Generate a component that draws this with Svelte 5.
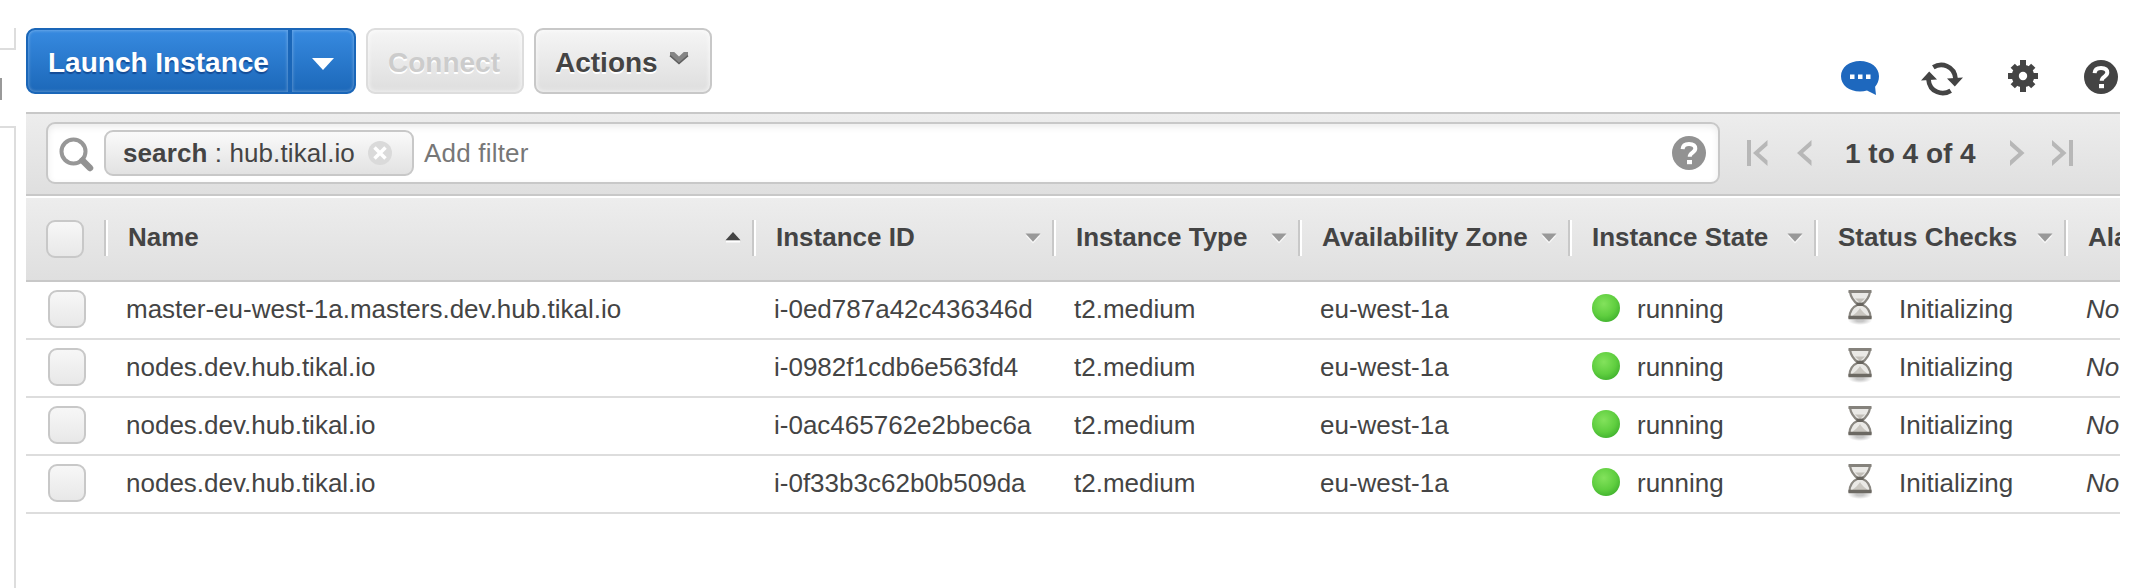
<script>
  const columns = [
    { key: 'name', label: 'Name', width: 648, sort: 'up' },
    { key: 'id', label: 'Instance ID', width: 300, sort: 'down' },
    { key: 'type', label: 'Instance Type', width: 246, sort: 'down' },
    { key: 'zone', label: 'Availability Zone', width: 270, sort: 'down' },
    { key: 'state', label: 'Instance State', width: 246, sort: 'down' },
    { key: 'checks', label: 'Status Checks', width: 250, sort: 'down' },
    { key: 'alarm', label: 'Ala', width: 56, sort: null }
  ];
  const template = '78px ' + columns.map((c) => c.width + 'px').join(' ');
  const common = { type: 't2.medium', zone: 'eu-west-1a', state: 'running', checks: 'Initializing', alarm: 'No' };
  const rows = [
    { name: 'master-eu-west-1a.masters.dev.hub.tikal.io', id: 'i-0ed787a42c436346d', ...common },
    { name: 'nodes.dev.hub.tikal.io', id: 'i-0982f1cdb6e563fd4', ...common },
    { name: 'nodes.dev.hub.tikal.io', id: 'i-0ac465762e2bbec6a', ...common },
    { name: 'nodes.dev.hub.tikal.io', id: 'i-0f33b3c62b0b509da', ...common }
  ];
</script>

{#snippet help(color)}
  <svg width="34" height="34" viewBox="0 0 34 34">
    <circle cx="17" cy="17" r="17" fill={color} />
    <path d="M10.600 13.200C10.800 9.300 13.400 7.900 17 7.900c3.800 0 6.300 1.600 6.300 4.700 0 4.200-5.600 3.800-5.600 8.200" fill="none" stroke="#fff" stroke-width="4" />
    <rect x="15" y="24" width="5" height="4.200" fill="#fff" />
  </svg>
{/snippet}

<div class="page">
  <aside>
    <div class="side-top"></div>
    <div class="side-tab"><i></i></div>
    <div class="side-body"></div>
  </aside>

  <main>
    <header>
      <div class="buttons">
        <div class="split">
          <button class="launch">Launch Instance</button>
          <button class="drop" aria-label="Launch options">
            <svg width="22" height="12" viewBox="0 0 22 12"><path d="M0 0H22L11 12Z" fill="#fff" /></svg>
          </button>
        </div>
        <button class="plain disabled">Connect</button>
        <button class="plain actions">
          Actions
          <svg width="20" height="14" viewBox="0 0 20 14">
            <path d="M1 1H5.200L10 5.500L14.800 1H19V4.600L10 13L1 4.600Z" fill="#858585" />
            <path d="M1 4.600L10 12.500L19 4.600" fill="none" stroke="#606060" stroke-width="1.500" />
          </svg>
        </button>
      </div>
      <div class="tools">
        <svg width="40" height="36" viewBox="0 0 40 36">
          <path d="M20 1C9 1 1 7.500 1 16.300S9 31.500 20 31.500c2.500 0 4.900-.3 7-.9L36 35l-.9-8.200C37.600 24 39 20.500 39 16.300 39 7.500 31 1 20 1Z" fill="#1e68be" />
          <path d="M10 14.500h4.500v4.500H10zM18 14.500h4.500v4.500H18zM26 14.500h4.500v4.500H26z" fill="#fff" />
        </svg>
        <svg class="refresh" width="42" height="34" viewBox="0 0 42 34">
          <g fill="none" stroke="#444" stroke-width="4.600">
            <path d="M12.300 5.300C20 .3 33.500 3 34.600 17" />
            <path d="M29.700 28.700C22 33.700 8.500 31 7.400 17" />
          </g>
          <path d="M26 16.500L42 15.500L33.800 24.500Z M16 17.500L0 18.500L8.200 9.500Z" fill="#444" />
        </svg>
        <svg class="gear" width="30" height="32" viewBox="-15 -16 30 32">
          <g fill="#444">
            <circle r="11.300" />
            <rect x="-3" y="-16" width="6" height="32" />
            <rect x="-15" y="-3" width="30" height="6" />
            <rect x="-3" y="-14.500" width="6" height="29" transform="rotate(45)" />
            <rect x="-3" y="-14.500" width="6" height="29" transform="rotate(-45)" />
          </g>
          <circle r="4.200" fill="#fff" />
        </svg>
        {@render help('#444')}
      </div>
    </header>

    <section class="filter">
      <div class="search">
        <svg class="glass" width="36" height="36" viewBox="0 0 36 36">
          <circle cx="14.500" cy="14.500" r="12" fill="none" stroke="#979797" stroke-width="4" />
          <path d="M23.500 23.500L31 31" stroke="#929292" stroke-width="6.500" stroke-linecap="round" />
        </svg>
        <div class="chip">
          <b>search</b>&nbsp;: hub.tikal.io
          <svg width="24" height="24" viewBox="0 0 24 24">
            <circle cx="12" cy="12" r="12" fill="#dadada" />
            <path d="M6.500 6.500L17.500 17.500M17.500 6.500L6.500 17.500" stroke="#fff" stroke-width="3.500" />
          </svg>
        </div>
        <span class="hint">Add filter</span>
        {@render help('#929292')}
      </div>
      <nav>
        <svg width="22" height="26" viewBox="0 0 22 26"><path d="M0 0H4V26H0Z M20.500 0V5.500L12 13L20.500 20.500V26L6 13Z" fill="#b7b7b7" /></svg>
        <svg class="prev" width="15" height="26" viewBox="0 0 15 26"><path d="M14.500 0V5.500L6 13L14.500 20.500V26L0 13Z" fill="#b7b7b7" /></svg>
        <b>1 to 4 of 4</b>
        <svg class="next" width="15" height="26" viewBox="0 0 15 26"><path d="M0 0V5.500L8.500 13L0 20.500V26L14.500 13Z" fill="#b7b7b7" /></svg>
        <svg class="last" width="21" height="26" viewBox="0 0 21 26"><path d="M17 0H21V26H17Z M0 0V5.500L8.500 13L0 20.500V26L14.500 13Z" fill="#b7b7b7" /></svg>
      </nav>
    </section>

    <section class="table">
      <div class="grid head" style:grid-template-columns={template}>
        <div class="pick"><span class="box"></span></div>
        {#each columns as col}
          <div class="th">
            <span>{col.label}</span>
            {#if col.sort === 'up'}
              <svg width="16" height="12" viewBox="0 0 16 12"><path d="M1 10.500H15" stroke="#fff" stroke-width="2" /><path d="M.5 9.300L8 1L15.500 9.300Z" fill="#444" /></svg>
            {:else if col.sort === 'down'}
              <svg class="down" width="16" height="12" viewBox="0 0 16 12"><path d="M.5 3.500L8 11.500L15.500 3.500Z" fill="#f8f8f8" /><path d="M.5 1.500H15.500L8 9.800Z" fill="#999" /></svg>
            {/if}
          </div>
        {/each}
      </div>
      {#each rows as row}
        <div class="grid row" style:grid-template-columns={template}>
          <div class="pick"><span class="box"></span></div>
          {#each columns as col}
            <div class="td {col.key}">
              {#if col.key === 'state'}
                <i class="dot"></i>
              {:else if col.key === 'checks'}
                <svg class="hourglass" width="28" height="36" viewBox="0 0 28 36">
                  <defs>
                    <radialGradient id="shade"><stop offset=".3" stop-color="#000" stop-opacity=".22" /><stop offset="1" stop-color="#000" stop-opacity="0" /></radialGradient>
                  </defs>
                  <ellipse cx="14" cy="31.500" rx="12" ry="4.500" fill="url(#shade)" />
                  <path d="M4 3C5 9.500 8 12.500 12 15.500C6.500 18 3.500 22 3.500 28.500H24.500C24.500 22 21.500 18 16 15.500C20 12.500 23 9.500 24 3Z" fill="#eae9e6" stroke="#8b8882" stroke-width="2.200" />
                  <path d="M9 9.500H19L14 14Z" fill="#c2bfb9" />
                  <path d="M6 27.500C8 25 11 24 14 19C17 24 20 25 22 27.500Z" fill="#c9c6c0" />
                  <path d="M10.500 15.300H17.500" stroke="#67645e" stroke-width="3.400" />
                  <path d="M2.500 2.500H25.500" stroke="#85827c" stroke-width="3" />
                  <path d="M2.500 28.500H25.500" stroke="#6c6963" stroke-width="3.500" />
                </svg>
              {/if}
              <span>{row[col.key]}</span>
            </div>
          {/each}
        </div>
      {/each}
    </section>
  </main>
</div>

<style>
  :global(body) { background: #fff; }
  * { box-sizing: border-box; }
  svg { display: block; flex: none; }
  .page {
    display: flex;
    width: 2134px;
    height: 588px;
    overflow: hidden;
    font: 26px/30px "Liberation Sans", Arial, sans-serif;
    color: #444;
  }
  aside { display: flex; flex-direction: column; flex: none; width: 16px; margin-right: 10px; padding-top: 28px; }
  .side-top { height: 22px; border: solid #ddd; border-width: 0 2px 2px 0; }
  .side-tab { height: 76px; padding-top: 28px; }
  .side-tab i { display: block; width: 2px; height: 22px; background: #999; }
  .side-body { flex: 1; border: solid #ddd; border-width: 2px 2px 0 0; }
  main { width: 2094px; overflow: hidden; }

  header { display: flex; justify-content: space-between; height: 112px; padding-top: 28px; }
  .buttons { display: flex; gap: 10px; height: 66px; }
  button {
    display: flex; align-items: center; margin: 0; height: 66px;
    font: bold 28px/32px "Liberation Sans", Arial, sans-serif;
  }
  .split { display: flex; width: 330px; }
  .launch, .drop {
    color: #fff; border: 2px solid #1a66b8;
    background: linear-gradient(#378ae0, #1c68b9);
    box-shadow: inset 0 0 3px 1px rgba(255, 255, 255, .25);
    text-shadow: 0 2px 1px #144c96;
  }
  .launch { width: 264px; padding: 3px 0 0 20px; border-radius: 9px 0 0 9px; }
  .drop { width: 66px; padding: 5px 0 0 20px; border-radius: 0 9px 9px 0; }
  .plain {
    border: 2px solid #c8c8c8; border-radius: 9px; color: #444;
    background: linear-gradient(#f5f5f5, #dedede);
    box-shadow: inset 0 0 4px 1px rgba(255, 255, 255, .6);
    text-shadow: 0 2px 0 #fff;
  }
  .disabled { width: 158px; padding: 3px 0 0 20px; border-color: #ddd; color: #ccc; }
  .actions { width: 178px; padding: 3px 0 0 19px; gap: 12px; }
  .actions svg { margin: -9px 0 0 -1px; }
  .tools { display: flex; align-items: flex-start; padding: 32px 2px 0 0; }
  .tools svg { flex: none; }
  .tools .refresh { margin: 2px 0 0 41px; }
  .tools .gear { margin: 0 46px 0 45px; }

  .filter {
    display: flex; align-items: center; height: 84px; padding: 0 48px 2px 20px;
    border: solid #c8c8c8; border-width: 2px 0;
    background: linear-gradient(#ededed, #dfdfdf);
  }
  .search {
    display: flex; align-items: center; flex: none; width: 1674px; height: 62px; padding: 0 12px 0 10px;
    border: 2px solid #c8c8c8; border-radius: 9px; background: #fff;
    box-shadow: inset 0 3px 7px rgba(0, 0, 0, .08);
    letter-spacing: .1px;
  }
  .glass { margin: 4px 10px 0 1px; }
  .chip {
    display: flex; align-items: center; width: 310px; height: 46px; margin-left: -1px; padding-left: 17px;
    border: 2px solid #c8c8c8; border-radius: 9px;
    background: linear-gradient(#fafafa, #e2e2e2);
  }
  .chip svg { margin-left: 13px; }
  .hint { flex: 1; margin-left: 10px; letter-spacing: .2px; color: #777; }
  nav { display: flex; align-items: center; flex: 1; margin-left: 27px; }
  nav b { margin: 2px 0 0 33px; font-size: 28px; white-space: nowrap; }
  .prev { margin-left: 28px; }
  .next { margin-left: 34px; }
  .last { margin-left: 27px; }

  .table { padding-top: 2px; }
  .grid { display: grid; }
  .head { height: 84px; border-bottom: 2px solid #c8c8c8; background: linear-gradient(#ededed, #dfdfdf); }
  .row { height: 58px; border-bottom: 2px solid #ddd; }
  .box {
    display: block; width: 38px; height: 38px; border: 2px solid #c8c8c8; border-radius: 9px;
    background: linear-gradient(#f7f7f7, #e8e8e8);
  }
  .head .pick { padding: 22px 0 0 20px; }
  .row .pick { padding: 8px 0 0 22px; }
  .th {
    display: flex; align-items: center; justify-content: space-between; overflow: hidden;
    height: 36px; margin-top: 22px; padding: 0 11px 2px 20px;
    border-left: 2px solid #c8c8c8; box-shadow: inset 2px 0 #fff;
    font-weight: bold; white-space: nowrap;
  }
  .th span { padding-left: 2px; }
  .th svg { margin-top: -1px; }
  .th .down { margin-top: 1px; }
  .th:last-child { padding-right: 0; }
  .td { display: flex; align-items: center; overflow: hidden; padding: 0 0 2px 22px; white-space: nowrap; }
  .dot {
    width: 28px; height: 28px; margin: -2px 17px 0 2px; border-radius: 50%;
    background: radial-gradient(circle at 42% 35%, #83e25c, #5fce3f 50%, #2b9e22 100%);
  }
  .hourglass { margin: -4px 25px 0 10px; }
  .alarm { font-style: italic; }
</style>
